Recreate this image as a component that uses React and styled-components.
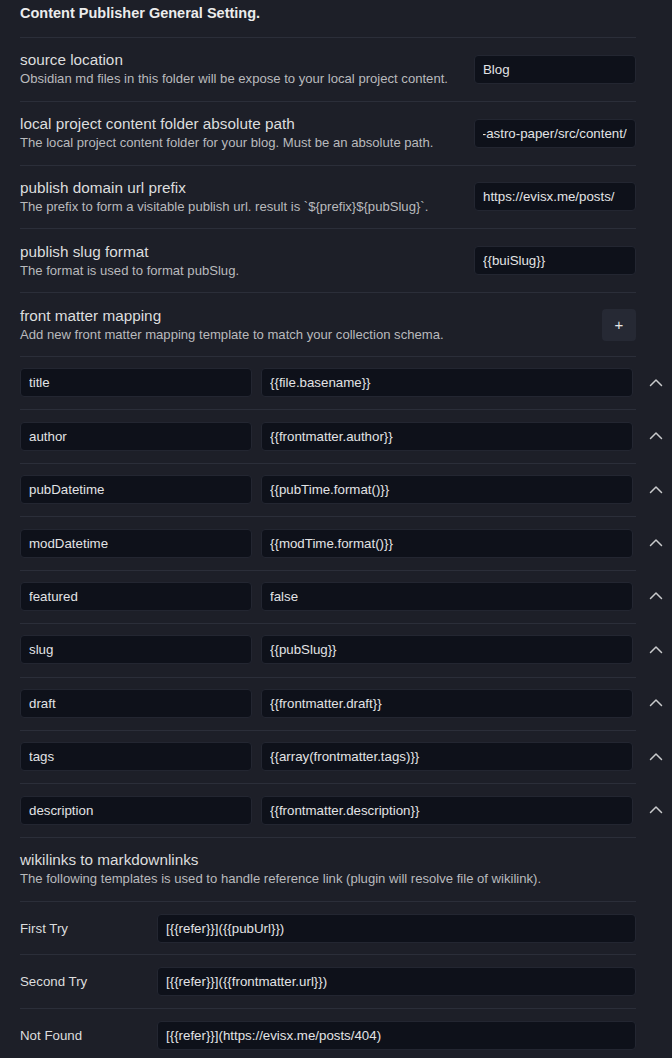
import React, { useEffect, useRef } from 'react';
import styled, { createGlobalStyle } from 'styled-components';

const GlobalStyle = createGlobalStyle`
    html, body {
        margin: 0;
        padding: 0;
        background: #1d1f28;
        overflow: hidden;
    }
    body {
        font-family: "Liberation Sans", Arial, sans-serif;
        color: #dcddde;
        -webkit-font-smoothing: antialiased;
    }
`;

const Page = styled.div`
    padding: 0 0 0 20px;
    width: 672px;
    box-sizing: border-box;
`;

const Heading = styled.h3`
    margin: 0 36px 0 0;
    padding: 4px 0 15px;
    font-size: 14.5px;
    line-height: 18px;
    font-weight: 700;
    color: #ececec;
`;

const Divided = styled.div`
    border-top: 1px solid #2b2e39;
    margin-right: 36px;
    box-sizing: border-box;
`;

const SettingItem = styled(Divided)`
    height: 63.8px;
    display: flex;
    align-items: center;
    justify-content: space-between;
    gap: 20px;
`;

const Info = styled.div`
    display: flex;
    flex-direction: column;
    min-width: 0;
    padding-top: 2px;
`;

const Name = styled.div`
    font-size: 15.3px;
    line-height: 18px;
    color: #dcddde;
`;

const Desc = styled.div`
    font-size: 13.1px;
    line-height: 20px;
    color: #b9babd;
    white-space: nowrap;
`;

const TextBox = styled.input`
    height: 29px;
    box-sizing: border-box;
    width: ${p => p.$w ? `${p.$w}px` : '100%'};
    flex-shrink: 0;
    margin: 0;
    background: #0e111a;
    border: 1px solid #232631;
    border-radius: 4px;
    padding: 0 8px;
    font-family: inherit;
    font-size: 13.3px;
    color: #e2e3e5;
    caret-color: #e2e3e5;
    outline: none;
`;

const AddButton = styled.button`
    width: 34px;
    height: 32px;
    flex-shrink: 0;
    border: none;
    border-radius: 4px;
    background: #262934;
    color: #e6e6e6;
    font-family: inherit;
    font-size: 15px;
    line-height: 1;
    padding: 0;
    cursor: pointer;
`;

const MapRow = styled.div`
    height: 53.45px;
    box-sizing: border-box;
    display: grid;
    grid-template-columns: 232px 372px 1fr;
    column-gap: 9px;
    align-items: center;
    background: linear-gradient(#2b2e39, #2b2e39) top left / calc(100% - 36px) 1px no-repeat;
`;

const Collapse = styled.button`
    border: none;
    background: none;
    padding: 0;
    color: #c9cacc;
    display: flex;
    align-items: center;
    justify-content: flex-start;
    margin-left: 7px;
    cursor: pointer;
`;

const WikiRow = styled(Divided)`
    height: 53.6px;
    display: grid;
    grid-template-columns: 137px 1fr;
    align-items: center;
`;

const WikiLabel = styled.div`
    font-size: 13.3px;
    color: #dcddde;
`;

const settings = [
    { name: 'source location', desc: 'Obsidian md files in this folder will be expose to your local project content.', value: 'Blog' },
    { name: 'local project content folder absolute path', desc: 'The local project content folder for your blog. Must be an absolute path.', value: '/Users/evisx/code/blog-astro-paper/src/content/', focused: true },
    { name: 'publish domain url prefix', desc: 'The prefix to form a visitable publish url. result is `${prefix}${pubSlug}`.', value: 'https://evisx.me/posts/' },
    { name: 'publish slug format', desc: 'The format is used to format pubSlug.', value: '{{buiSlug}}' },
];

const mappings = [
    ['title', '{{file.basename}}'],
    ['author', '{{frontmatter.author}}'],
    ['pubDatetime', '{{pubTime.format()}}'],
    ['modDatetime', '{{modTime.format()}}'],
    ['featured', 'false'],
    ['slug', '{{pubSlug}}'],
    ['draft', '{{frontmatter.draft}}'],
    ['tags', '{{array(frontmatter.tags)}}'],
    ['description', '{{frontmatter.description}}'],
];

const wikilinks = [
    ['First Try', '[{{refer}}]({{pubUrl}})'],
    ['Second Try', '[{{refer}}]({{frontmatter.url}})'],
    ['Not Found', '[{{refer}}](https://evisx.me/posts/404)'],
];

const ChevronUp = () => (
    <svg width="14" height="10" viewBox="0 0 14 10" fill="none">
        <path d="M1.5 7.5 7 2l5.5 5.5" stroke="currentColor" strokeWidth="1.5" strokeLinecap="round" strokeLinejoin="round" />
    </svg>
);

// text input that is focused with its caret at the end, scrolled to show the tail of the value
const FocusedInput = ({ value, width }) => {
    const ref = useRef(null);
    useEffect(() => {
        const el = ref.current;
        if (!el) return;
        el.focus();
        el.setSelectionRange(value.length, value.length);
        el.scrollLeft = el.scrollWidth;
    }, [value]);
    return <TextBox ref={ref} $w={width} defaultValue={value} spellCheck={false} />;
};

export default function App() {
    return (
        <Page>
            <GlobalStyle />
            <Heading>Content Publisher General Setting.</Heading>

            {settings.map(s => (
                <SettingItem key={s.name}>
                    <Info>
                        <Name>{s.name}</Name>
                        <Desc>{s.desc}</Desc>
                    </Info>
                    {s.focused
                        ? <FocusedInput value={s.value} width={162} />
                        : <TextBox $w={162} defaultValue={s.value} spellCheck={false} />}
                </SettingItem>
            ))}

            <SettingItem>
                <Info>
                    <Name>front matter mapping</Name>
                    <Desc>Add new front matter mapping template to match your collection schema.</Desc>
                </Info>
                <AddButton>+</AddButton>
            </SettingItem>

            {mappings.map(([key, value]) => (
                <MapRow key={key}>
                    <TextBox defaultValue={key} spellCheck={false} />
                    <TextBox defaultValue={value} spellCheck={false} />
                    <Collapse aria-label="collapse">
                        <ChevronUp />
                    </Collapse>
                </MapRow>
            ))}

            <SettingItem>
                <Info>
                    <Name>wikilinks to markdownlinks</Name>
                    <Desc>The following templates is used to handle reference link (plugin will resolve file of wikilink).</Desc>
                </Info>
            </SettingItem>

            {wikilinks.map(([label, value]) => (
                <WikiRow key={label}>
                    <WikiLabel>{label}</WikiLabel>
                    <TextBox defaultValue={value} spellCheck={false} />
                </WikiRow>
            ))}
        </Page>
    );
}
